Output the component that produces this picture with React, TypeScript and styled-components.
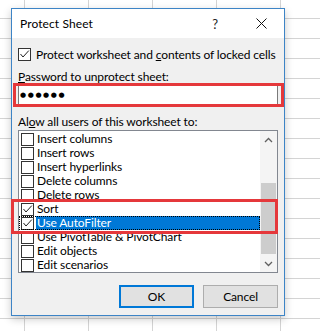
import React from "react";
import styled, { createGlobalStyle } from "styled-components";

const Global = createGlobalStyle`
  html, body { margin: 0; padding: 0; }
  body {
    width: 301px;
    height: 331px;
    overflow: hidden;
    background-color: #fff;
    background-image:
      linear-gradient(to right, #d4d4d4 1px, transparent 1px),
      linear-gradient(to bottom, #d4d4d4 1px, transparent 1px);
    background-size: 64px 100%, 100% 20px;
    background-position: 24px 0, 0 18px;
    font-family: "Segoe UI", Lato, "Noto Sans", sans-serif;
    font-size: 12px;
    letter-spacing: -0.12px;
    color: #000;
  }
`;

const Page = styled.div`
  padding: 8px 0 0 11px;
`;

const Dialog = styled.div`
  box-sizing: border-box;
  width: 274px;
  height: 308px;
  border: 1px solid #3d84c6;
  background: #f0f0f0;
  display: flex;
  flex-direction: column;
  box-shadow: 0 3px 8px rgba(0, 0, 0, 0.22);
`;

const TitleBar = styled.div`
  height: 29px;
  background: #fff;
  display: flex;
  align-items: center;
  padding-left: 8px;
`;

const Title = styled.div`
  flex: 1;
  font-size: 12px;
  letter-spacing: 0.1px;
`;

const TitleButton = styled.div`
  width: 46px;
  height: 29px;
  display: flex;
  align-items: center;
  justify-content: center;
  font-size: 13px;
  color: #222;
`;

const Body = styled.div`
  flex: 1;
  display: flex;
  flex-direction: column;
  padding: 8px 6px 7px 6px;
`;

const CheckRow = styled.div`
  height: 16px;
  display: flex;
  align-items: center;
  gap: 5px;
  white-space: nowrap;
`;

const Box = styled.span`
  box-sizing: border-box;
  width: 13px;
  height: 13px;
  flex: none;
  border: 1px solid #333;
  background: #fff;
  display: flex;
  align-items: center;
  justify-content: center;
`;

const FieldLabel = styled.div<{ $gap: number }>`
  margin-top: ${(p) => p.$gap}px;
  height: 16px;
  line-height: 16px;
  white-space: nowrap;
`;

const PasswordWrap = styled.div`
  position: relative;
  height: 20px;
`;

const PasswordInput = styled.div`
  box-sizing: border-box;
  height: 20px;
  border: 1px solid #7a7a7a;
  background: #fff;
  display: flex;
  align-items: center;
  padding-left: 1px;
  font-family: "DejaVu Sans", sans-serif;
  font-size: 7px;
  letter-spacing: 1.6px;
`;

const RedBox = styled.div<{ $l: number; $t: number; $w: number; $h: number }>`
  position: absolute;
  box-sizing: border-box;
  left: ${(p) => p.$l}px;
  top: ${(p) => p.$t}px;
  width: ${(p) => p.$w}px;
  height: ${(p) => p.$h}px;
  border: 3px solid #e5383b;
  pointer-events: none;
`;

const ListBox = styled.div`
  position: relative;
  box-sizing: border-box;
  height: 143px;
  border: 1px solid #828790;
  background: #fff;
  display: flex;
`;

const Items = styled.div`
  flex: 1;
  padding-top: 1px;
  display: flex;
  flex-direction: column;
`;

const Row = styled.div<{ $focused?: boolean }>`
  height: 14px;
  display: flex;
  align-items: center;
  padding-left: 2px;
  gap: 2px;
  outline: ${(p) => (p.$focused ? "1px dotted #000" : "none")};
  outline-offset: -1px;
`;

const RowLabel = styled.span<{ $selected?: boolean }>`
  flex: 1;
  height: 14px;
  line-height: 14px;
  padding-left: 1px;
  white-space: nowrap;
  background: ${(p) => (p.$selected ? "#0078d7" : "transparent")};
  color: ${(p) => (p.$selected ? "#fff" : "#000")};
`;

const ScrollBar = styled.div`
  width: 17px;
  background: #f4f4f4;
  display: flex;
  flex-direction: column;
  align-items: center;
`;

const Arrow = styled.div`
  height: 17px;
  width: 17px;
  display: flex;
  align-items: center;
  justify-content: center;
`;

const Track = styled.div`
  flex: 1;
  width: 15px;
  padding-top: 35px;
  display: flex;
  flex-direction: column;
`;

const Thumb = styled.div`
  height: 71px;
  background: #cdcdcd;
`;

const Buttons = styled.div`
  margin-top: 12px;
  display: flex;
  justify-content: flex-end;
  gap: 9px;
`;

const Button = styled.div<{ $default?: boolean }>`
  box-sizing: border-box;
  width: 75px;
  height: 23px;
  background: #e1e1e1;
  border: ${(p) => (p.$default ? "2px solid #0078d7" : "1px solid #adadad")};
  display: flex;
  align-items: center;
  justify-content: center;
`;

const U = styled.span`
  text-decoration: underline;
`;

const Check = () => (
  <svg width="11" height="11" viewBox="0 0 11 11">
    <path d="M1.5 5 L4 8 L9.8 1.6" stroke="#222" strokeWidth="1" fill="none" />
  </svg>
);

const CheckBox = ({ checked }: { checked?: boolean }) => (
  <Box>{checked ? <Check /> : null}</Box>
);

const Chevron = ({ up }: { up?: boolean }) => (
  <svg width="9" height="6" viewBox="0 0 9 6">
    <path
      d={up ? "M1 5 L4.5 1.5 L8 5" : "M1 1 L4.5 4.5 L8 1"}
      stroke="#606060"
      strokeWidth="1.3"
      fill="none"
    />
  </svg>
);

const items = [
  { label: "Insert columns" },
  { label: "Insert rows" },
  { label: "Insert hyperlinks" },
  { label: "Delete columns" },
  { label: "Delete rows" },
  { label: "Sort", checked: true },
  { label: "Use AutoFilter", checked: true, selected: true },
  { label: "Use PivotTable & PivotChart" },
  { label: "Edit objects" },
  { label: "Edit scenarios" },
];

export default function App() {
  return (
    <>
      <Global />
      <Page>
        <Dialog>
          <TitleBar>
            <Title>Protect Sheet</Title>
            <TitleButton>?</TitleButton>
            <TitleButton>
              <svg width="11" height="11" viewBox="0 0 11 11">
                <path d="M0.5 0.5 L10.5 10.5 M10.5 0.5 L0.5 10.5" stroke="#111" strokeWidth="1" />
              </svg>
            </TitleButton>
          </TitleBar>
          <Body>
            <CheckRow>
              <CheckBox checked />
              <span>
                Protect worksheet and <U>c</U>ontents of locked cells
              </span>
            </CheckRow>
            <FieldLabel $gap={7}>
              <U>P</U>assword to unprotect sheet:
            </FieldLabel>
            <PasswordWrap>
              <PasswordInput>●●●●●●</PasswordInput>
              <RedBox $l={-5} $t={-2} $w={271} $h={24} />
            </PasswordWrap>
            <FieldLabel $gap={9}>
              Al<U>o</U>w all users of this worksheet to:
            </FieldLabel>
            <ListBox>
              <Items>
                {items.map((it) => (
                  <Row key={it.label} $focused={it.selected}>
                    <CheckBox checked={it.checked} />
                    <RowLabel $selected={it.selected}>{it.label}</RowLabel>
                  </Row>
                ))}
              </Items>
              <ScrollBar>
                <Arrow>
                  <Chevron up />
                </Arrow>
                <Track>
                  <Thumb />
                </Track>
                <Arrow>
                  <Chevron />
                </Arrow>
              </ScrollBar>
              <RedBox $l={-8} $t={68} $w={267} $h={35} />
            </ListBox>
            <Buttons>
              <Button $default>OK</Button>
              <Button>Cancel</Button>
            </Buttons>
          </Body>
        </Dialog>
      </Page>
    </>
  );
}
